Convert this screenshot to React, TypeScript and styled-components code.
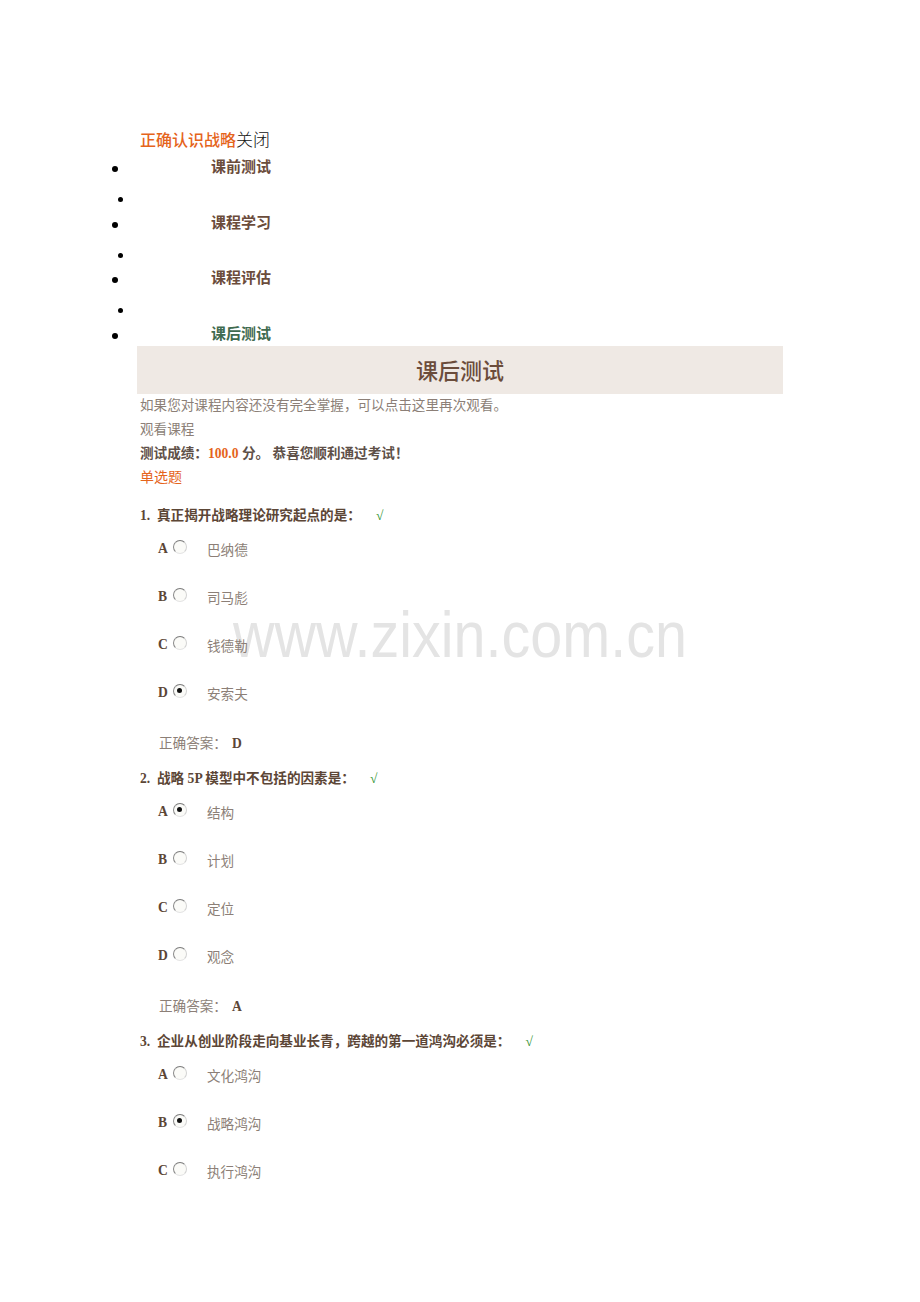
import React from 'react';
import styled, {createGlobalStyle} from 'styled-components';

const GlobalStyle = createGlobalStyle`
  html, body {
    margin: 0;
    padding: 0;
    background: #fff;
  }
  body {
    font-family: "Liberation Serif", "Noto Sans CJK SC", serif;
    font-size: 13.6px;
    color: #5c4636;
  }
`;

const Page = styled.div`
  position: relative;
  isolation: isolate;
  width: 920px;
  min-height: 1302px;
  padding-top: 128px;
  box-sizing: border-box;
`;

const Watermark = styled.div`
  position: absolute;
  left: 233px;
  top: 602px;
  z-index: -1;
  font-family: "Liberation Sans", Arial, sans-serif;
  font-size: 65px;
  line-height: 1;
  color: #e4e4e4;
  white-space: nowrap;
  transform: scaleX(0.885);
  transform-origin: left top;
  pointer-events: none;
`;

const TitleBar = styled.div`
  padding-left: 140px;
  height: 22px;
  line-height: 22px;
`;

const CourseName = styled.span`
  font-family: "Noto Sans CJK SC", sans-serif;
  font-size: 16px;
  font-weight: 500;
  color: #e5641b;
`;

const Close = styled.span`
  font-family: "Noto Sans CJK SC", sans-serif;
  font-size: 17px;
  font-weight: 300;
  color: #111;
`;

const NavList = styled.ul`
  list-style: none;
  margin: 7px 0 0;
  padding: 0;
`;

const NavItem = styled.li<{$active?: boolean}>`
  display: flex;
  align-items: center;
  height: 24px;
  padding-left: 112px;
  font-family: "Noto Sans CJK SC", sans-serif;
  font-weight: 700;
  font-size: 15px;
  color: ${p => (p.$active ? '#3f6b50' : '#6b4c3b')};
`;

const NavSpacer = styled.li`
  display: flex;
  align-items: flex-start;
  height: 31.7px;
  padding: 16px 0 0 118px;
  box-sizing: border-box;
`;

const Dot = styled.span<{$small?: boolean}>`
  display: block;
  flex: none;
  width: ${p => (p.$small ? 5 : 6)}px;
  height: ${p => (p.$small ? 5 : 6)}px;
  border-radius: 50%;
  background: #000;
`;

const NavLabel = styled.span`
  margin-left: 93px;
  line-height: 18px;
  margin-bottom: 6px;
`;

const Header = styled.div`
  margin: -2px 0 0 137px;
  width: 646px;
  height: 48px;
  line-height: 46px;
  background: #efe9e4;
  text-align: center;
  font-family: "Noto Sans CJK SC", sans-serif;
  font-size: 22px;
  font-weight: 500;
  color: #6b4c3b;
`;

const Content = styled.div`
  padding-left: 140px;
`;

const Line = styled.div<{$tone?: 'muted' | 'strong' | 'orange'}>`
  height: 24px;
  line-height: 24px;
  font-size: ${p => (p.$tone === 'orange' ? 14 : 13.6)}px;
  font-weight: ${p => (p.$tone === 'strong' ? 700 : 400)};
  color: ${p =>
    p.$tone === 'orange' ? '#e5641b' : p.$tone === 'strong' ? '#5e5048' : '#8c7f77'};
`;

const Score = styled.span`
  color: #e5641b;
  font-weight: 700;
`;

const Question = styled.div<{$first?: boolean}>`
  margin-top: ${p => (p.$first ? 14 : 11)}px;
  height: 24px;
  line-height: 24px;
  font-weight: 700;
  color: #5c4636;
  display: flex;
`;

const QNum = styled.span`
  width: 17px;
`;

const Check = styled.span`
  margin-left: 15px;
  color: #2a8f2a;
  font-weight: 700;
`;

const Options = styled.div`
  margin-top: 9px;
  display: flex;
  flex-direction: column;
  gap: 24px;
`;

const Option = styled.div`
  display: flex;
  align-items: center;
  height: 24px;
  padding-left: 18px;
`;

const Letter = styled.span`
  width: 15px;
  font-weight: 700;
  color: #5c4636;
`;

const Radio = styled.span<{$checked?: boolean}>`
  position: relative;
  box-sizing: border-box;
  width: 14px;
  height: 14px;
  margin-top: -4px;
  border-radius: 50%;
  border: 1.5px solid;
  border-color: #7a7a7a #d2d2d2 #e4e4e4 #888;
  background: #fbfbf8;
  &::after {
    content: '';
    display: ${p => (p.$checked ? 'block' : 'none')};
    position: absolute;
    left: 3px;
    top: 3px;
    width: 5px;
    height: 5px;
    border-radius: 50%;
    background: #111;
  }
`;

const OptionText = styled.span`
  margin-left: 20px;
  color: #8c7f77;
`;

const Answer = styled.div`
  margin-top: 27px;
  padding-left: 19px;
  height: 24px;
  line-height: 24px;
  color: #8c7f77;
  b {
    color: #5c4636;
    margin-left: 5px;
  }
`;

type Q = {
  num: number;
  text: string;
  options: string[];
  chosen: number;
  answer?: string;
};

const questions: Q[] = [
  {num: 1, text: '真正揭开战略理论研究起点的是：', options: ['巴纳德', '司马彪', '钱德勒', '安索夫'], chosen: 3, answer: 'D'},
  {num: 2, text: '战略 5P 模型中不包括的因素是：', options: ['结构', '计划', '定位', '观念'], chosen: 0, answer: 'A'},
  {num: 3, text: '企业从创业阶段走向基业长青，跨越的第一道鸿沟必须是：', options: ['文化鸿沟', '战略鸿沟', '执行鸿沟'], chosen: 1},
];

const letters = ['A', 'B', 'C', 'D'];
const nav = ['课前测试', '课程学习', '课程评估', '课后测试'];

export default function App() {
  return (
    <Page>
      <GlobalStyle/>
      <Watermark>www.zixin.com.cn</Watermark>
      <TitleBar>
        <CourseName>正确认识战略</CourseName><Close>关闭</Close>
      </TitleBar>
      <NavList>
        {nav.map((name, i) => (
          <React.Fragment key={name}>
            <NavItem $active={i === nav.length - 1}>
              <Dot/><NavLabel>{name}</NavLabel>
            </NavItem>
            {i < nav.length - 1 && <NavSpacer><Dot $small/></NavSpacer>}
          </React.Fragment>
        ))}
      </NavList>
      <Header>课后测试</Header>
      <Content>
        <Line $tone="muted">如果您对课程内容还没有完全掌握，可以点击这里再次观看。</Line>
        <Line $tone="muted">观看课程</Line>
        <Line $tone="strong">测试成绩：<Score>100.0</Score> 分。 恭喜您顺利通过考试！</Line>
        <Line $tone="orange">单选题</Line>
        {questions.map((q, qi) => (
          <div key={q.num}>
            <Question $first={qi === 0}>
              <QNum>{q.num}.</QNum>{q.text}<Check>√</Check>
            </Question>
            <Options>
              {q.options.map((o, oi) => (
                <Option key={o}>
                  <Letter>{letters[oi]}</Letter>
                  <Radio $checked={oi === q.chosen}/>
                  <OptionText>{o}</OptionText>
                </Option>
              ))}
            </Options>
            {q.answer && <Answer>正确答案：<b>{q.answer}</b></Answer>}
          </div>
        ))}
      </Content>
    </Page>
  );
}
